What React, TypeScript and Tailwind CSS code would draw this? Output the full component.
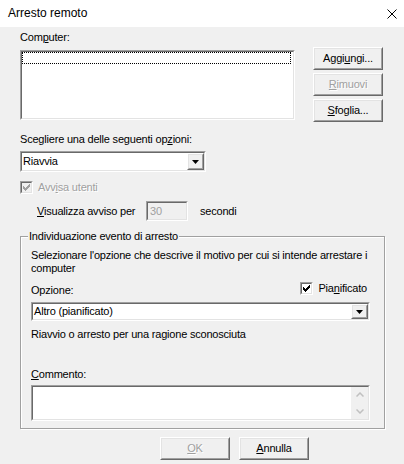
import type { ReactNode } from "react";

const Sunken = ({ className, inner, children }: { className?: string; inner?: string; children?: ReactNode }) => (
  <div className={`border border-t-[#a0a0a0] border-l-[#a0a0a0] border-b-white border-r-white ${className ?? ""}`}>
    <div className={`h-full border border-t-[#696969] border-l-[#696969] border-b-[#e3e3e3] border-r-[#e3e3e3] ${inner ?? "bg-white"}`}>
      {children}
    </div>
  </div>
);

const Raised = ({ className, children }: { className?: string; children?: ReactNode }) => (
  <div className={`border border-t-white border-l-white border-b-[#696969] border-r-[#696969] bg-[#f0f0f0] ${className ?? ""}`}>
    <div className="h-full flex items-center justify-center border border-t-[#e3e3e3] border-l-[#e3e3e3] border-b-[#a0a0a0] border-r-[#a0a0a0]">
      {children}
    </div>
  </div>
);

const Disabled = ({ children }: { children: ReactNode }) => (
  <span className="text-[#a0a0a0] [text-shadow:1px_1px_0_#fff]">{children}</span>
);

const Check = ({ color }: { color: string }) => (
  <svg width="9" height="9" viewBox="0 0 9 9" className="block">
    <path d="M1 3h1v1h1v1h1V4h1V3h1V2h1V1h1v3H7v1H6v1H5v1H4v1H3V7H2V6H1z" fill={color} />
  </svg>
);

const CheckBox = ({ disabled }: { disabled?: boolean }) => (
  <Sunken className="w-[13px] h-[13px] shrink-0" inner={disabled ? "bg-[#f0f0f0]" : "bg-white"}>
    <div className="h-full flex items-center justify-center">
      <Check color={disabled ? "#a0a0a0" : "#000"} />
    </div>
  </Sunken>
);

const Combo = ({ value, className, text }: { value: string; className: string; text: string }) => (
  <Sunken className={className}>
    <div className="h-full flex">
      <div className={`flex-1 flex items-center ${text} whitespace-nowrap`}>{value}</div>
      <Raised className="w-[17px] h-full">
        <svg width="7" height="4" viewBox="0 0 7 4" className="block">
          <path d="M0 0h7L3.5 4z" fill="#000" />
        </svg>
      </Raised>
    </div>
  </Sunken>
);

export default function App() {
  return (
    <div className="w-[404px] h-[464px] overflow-hidden bg-[#f0f0f0] text-black text-[11px] leading-[13px] tracking-[-0.2px] font-['Liberation_Sans',Arial,sans-serif]">
      {/* title bar */}
      <div className="h-[27px] bg-white flex items-center justify-between pl-[8px] pr-[7px]">
        <span className="text-[12px] tracking-normal">Arresto remoto</span>
        <svg width="10" height="10" viewBox="0 0 10 10" className="block">
          <path d="M0.5 0.5L9.5 9.5M9.5 0.5L0.5 9.5" stroke="#000" strokeWidth="1" />
        </svg>
      </div>

      <div className="px-[20px]">
        {/* computer list */}
        <div className="flex mt-[4px]">
          <div className="w-[275px]">
            <div className="h-[13px]">
              Com<u>p</u>uter:
            </div>
            <Sunken className="mt-[6px] h-[70px]">
              <div className="w-[269px] h-[12px] border border-dotted border-black" />
            </Sunken>
          </div>
          <div className="ml-[18px] mt-[16px] flex flex-col gap-[3px]">
            <Raised className="w-[70px] h-[23px]">
              Aggi<u>u</u>ngi...
            </Raised>
            <Raised className="w-[70px] h-[23px]">
              <Disabled>
                <u>R</u>imuovi
              </Disabled>
            </Raised>
            <Raised className="w-[70px] h-[23px]">
              <u>S</u>foglia...
            </Raised>
          </div>
        </div>

        {/* options */}
        <div className="mt-[11px] h-[13px]">
          Scegliere una delle seguenti op<u>z</u>ioni:
        </div>
        <Combo value="Riavvia" className="mt-[5px] w-[186px] h-[21px]" text="pl-[1px]" />

        <div className="mt-[9px] h-[13px] flex items-center gap-[5px]">
          <CheckBox disabled />
          <Disabled>
            Avv<u>i</u>sa utenti
          </Disabled>
        </div>

        <div className="mt-[7px] h-[20px] flex items-center pl-[17px]">
          <span className="w-[109px]">
            <u>V</u>isualizza avviso per
          </span>
          <Sunken className="w-[42px] h-[20px]" inner="bg-[#f0f0f0]">
            <div className="h-full flex items-center pl-[2px] text-[#a0a0a0]">30</div>
          </Sunken>
          <span className="ml-[12px]">secondi</span>
        </div>

        {/* shutdown event tracker */}
        <fieldset className="mt-[9px] w-[365px] border border-[#a0a0a0] shadow-[inset_1px_1px_0_#fff,1px_1px_0_#fff] pb-[7px]">
          <legend className="ml-[7px] px-[1px] bg-[#f0f0f0] leading-[13px]">Individuazione evento di arresto</legend>
          <div className="pl-[10px]">
            <div className="mt-[6px] whitespace-nowrap">
              Selezionare l'opzione che descrive il motivo per cui si intende arrestare i
              <br />
              computer
            </div>
            <div className="mt-[7px] h-[15px] flex justify-between w-[339px]">
              <span className="self-end">Opzione:</span>
              <div className="flex items-start gap-[5px] pr-[3px]">
                <CheckBox />
                <span>
                  Pia<u>n</u>ificato
                </span>
              </div>
            </div>
            <Combo value="Altro (pianificato)" className="mt-[5px] w-[339px] h-[19px]" text="pl-[1px]" />
            <div className="mt-[7px]">Riavvio o arresto per una ragione sconosciuta</div>
            <div className="mt-[27px]">
              <u>C</u>ommento:
            </div>
            <Sunken className="mt-[4px] w-[339px] h-[36px]">
              <div className="h-full flex justify-end">
                <div className="w-[17px] h-full bg-[#f0f0f0] flex flex-col items-center justify-between py-[5px]">
                  <svg width="8" height="5" viewBox="0 0 8 5" className="block">
                    <path d="M0.5 4.5L4 1L7.5 4.5" stroke="#c0c0c0" strokeWidth="1.5" fill="none" />
                  </svg>
                  <svg width="8" height="5" viewBox="0 0 8 5" className="block">
                    <path d="M0.5 0.5L4 4L7.5 0.5" stroke="#c0c0c0" strokeWidth="1.5" fill="none" />
                  </svg>
                </div>
              </div>
            </Sunken>
          </div>
        </fieldset>

        {/* dialog buttons */}
        <div className="mt-[8px] pl-[140px] flex gap-[9px]">
          <Raised className="w-[70px] h-[23px]">
            <Disabled>
              <u>O</u>K
            </Disabled>
          </Raised>
          <Raised className="w-[70px] h-[23px]">
            <u>A</u>nnulla
          </Raised>
        </div>
      </div>
    </div>
  );
}
